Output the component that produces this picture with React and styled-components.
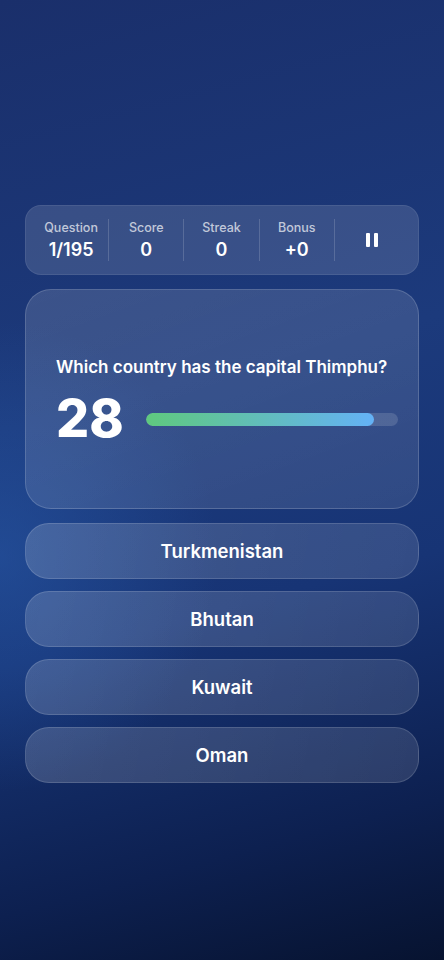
import React from "react";
import styled, { createGlobalStyle } from "styled-components";

const GlobalStyle = createGlobalStyle`
  html, body {
    margin: 0;
    padding: 0;
    height: 100%;
  }
  body {
    font-family: Inter, "Noto Sans", sans-serif;
    background: #0b1a40;
  }
`;

const Screen = styled.div`
  width: 444px;
  min-height: 960px;
  box-sizing: border-box;
  padding: 205px 25px 0;
  display: flex;
  flex-direction: column;
  gap: 14px;
  background:
    radial-gradient(ellipse 70% 35% at 0% 58%, rgba(40, 90, 170, 0.55), transparent 70%),
    linear-gradient(165deg, #1a2f6b 0%, #1c3a7c 40%, #173475 62%, #0d2050 85%, #071330 100%);
  color: #fff;
`;

const StatsBar = styled.div`
  height: 70px;
  box-sizing: border-box;
  padding: 0 8px;
  display: grid;
  grid-template-columns: repeat(5, 1fr);
  align-items: center;
  background: rgba(255, 255, 255, 0.13);
  border: 1px solid rgba(255, 255, 255, 0.08);
  border-radius: 16px;
`;

const Stat = styled.div`
  display: flex;
  flex-direction: column;
  align-items: center;
  justify-content: center;
  gap: 5px;
  height: 42px;
  border-right: ${(p) => (p.$last ? "none" : "1px solid rgba(255,255,255,0.16)")};
`;

const StatLabel = styled.span`
  font-size: 12.5px;
  line-height: 15px;
  font-weight: 500;
  color: rgba(255, 255, 255, 0.7);
`;

const StatValue = styled.span`
  font-size: 18px;
  line-height: 20px;
  font-weight: 600;
  color: #fff;
`;

const PauseButton = styled.button`
  background: none;
  border: none;
  padding: 0;
  display: flex;
  gap: 4px;
  cursor: pointer;

  span {
    width: 4px;
    height: 14px;
    border-radius: 1px;
    background: #fff;
  }
`;

const QuestionCard = styled.div`
  height: 220px;
  box-sizing: border-box;
  padding: 6px 20px 0 30px;
  display: flex;
  flex-direction: column;
  justify-content: center;
  gap: 10px;
  background: linear-gradient(160deg, rgba(255, 255, 255, 0.14), rgba(255, 255, 255, 0.1));
  border: 1px solid rgba(255, 255, 255, 0.16);
  border-radius: 26px;
`;

const QuestionText = styled.div`
  font-size: 17px;
  font-weight: 600;
  line-height: 24px;
`;

const TimerRow = styled.div`
  display: flex;
  align-items: center;
  gap: 24px;
`;

const Countdown = styled.div`
  font-size: 52px;
  font-weight: 800;
  line-height: 60px;
  width: 66px;
`;

const Track = styled.div`
  flex: 1;
  height: 13px;
  border-radius: 7px;
  background: rgba(255, 255, 255, 0.14);
  overflow: hidden;
`;

const Fill = styled.div`
  height: 100%;
  border-radius: 7px;
  background: linear-gradient(90deg, #5fc97e, #64b2f6);
`;

const AnswerList = styled.div`
  display: flex;
  flex-direction: column;
  gap: 12px;
`;

const AnswerButton = styled.button`
  height: 56px;
  border-radius: 24px;
  background: linear-gradient(100deg, rgba(255, 255, 255, 0.17), rgba(255, 255, 255, 0.12));
  border: 1px solid rgba(255, 255, 255, 0.14);
  color: #fff;
  font-family: Inter, "Noto Sans", sans-serif;
  font-size: 18.5px;
  font-weight: 600;
  cursor: pointer;
`;

const stats = [
  { label: "Question", value: "1/195" },
  { label: "Score", value: "0" },
  { label: "Streak", value: "0" },
  { label: "Bonus", value: "+0" },
];

const answers = ["Turkmenistan", "Bhutan", "Kuwait", "Oman"];

export default function App() {
  const timeLeft = 28;
  const progress = 90.5;

  return (
    <>
      <GlobalStyle />
      <Screen>
        <StatsBar>
          {stats.map((s) => (
            <Stat key={s.label}>
              <StatLabel>{s.label}</StatLabel>
              <StatValue>{s.value}</StatValue>
            </Stat>
          ))}
          <Stat $last>
            <PauseButton aria-label="Pause">
              <span />
              <span />
            </PauseButton>
          </Stat>
        </StatsBar>

        <QuestionCard>
          <QuestionText>Which country has the capital Thimphu?</QuestionText>
          <TimerRow>
            <Countdown>{timeLeft}</Countdown>
            <Track>
              <Fill style={{ width: `${progress}%` }} />
            </Track>
          </TimerRow>
        </QuestionCard>

        <AnswerList>
          {answers.map((a) => (
            <AnswerButton key={a}>{a}</AnswerButton>
          ))}
        </AnswerList>
      </Screen>
    </>
  );
}
